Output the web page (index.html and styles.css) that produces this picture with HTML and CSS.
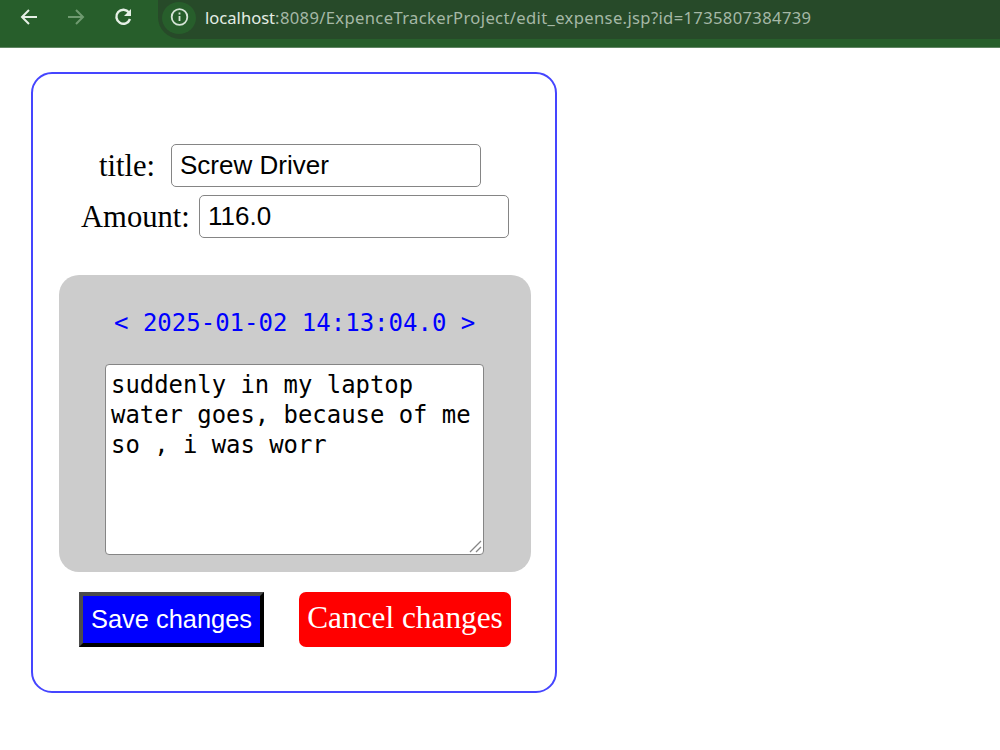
FILE: index.html
```
<!DOCTYPE html>
<html lang="en">
<head>
  <meta charset="UTF-8">
  <title>Edit Expense</title>
  <link rel="stylesheet" href="styles.css">
</head>
<body>
  <div class="toolbar">
    <svg class="nav" width="140" height="36" viewBox="0 0 140 36" fill="none" stroke-width="2">
      <path d="M37 17H22M29 10l-7 7 7 7" stroke="#e6f0e6"/>
      <path d="M68 17h15M76 10l7 7-7 7" stroke="#6f9a70"/>
      <path d="M129 12.5A7 7 0 1 0 130 19" stroke="#e6f0e6" stroke-width="2.4"/>
      <path d="M131 9v7h-7z" fill="#e6f0e6"/>
    </svg>
    <div class="address">
      <span class="site-info">
        <svg width="20" height="20" viewBox="0 0 20 20" fill="none" stroke="#d5e4d6" stroke-width="1.8">
          <circle cx="10.5" cy="9" r="7.8"/>
          <path d="M10.5 8v5M10.5 4.6v2"/>
        </svg>
      </span>
      <span class="url"><span class="host">localhost</span>:8089/ExpenceTrackerProject/edit_expense.jsp?id=1735807384739</span>
    </div>
  </div>

  <form class="card">
    <div class="field field-title">
      <label for="title">title:</label>
      <input type="text" id="title" name="title" value="Screw Driver">
    </div>
    <div class="field field-amount">
      <label for="amount">Amount:</label>
      <input type="text" id="amount" name="amount" value="116.0">
    </div>

    <div class="details">
      <div class="date">&lt; 2025-01-02 14:13:04.0 &gt;</div>
      <div class="note">
        <textarea name="description" spellcheck="false">suddenly in my laptop
water goes, because of me
so , i was worr</textarea>
        <svg class="grip" width="13" height="13" viewBox="0 0 13 13" stroke="#858585" stroke-width="1.3">
          <path d="M1 12L12 1M7 12l5-5"/>
        </svg>
      </div>
    </div>

    <div class="btns">
      <button type="submit" class="btn-save">Save changes</button>
      <a class="btn-cancel">Cancel changes</a>
    </div>
  </form>
</body>
</html>
```
FILE: styles.css
```
* {
  box-sizing: border-box;
}

body {
  margin: 0;
  background: white;
  font-family: "Liberation Serif", serif;
  font-size: 30.6px;
}

.toolbar {
  display: flex;
  height: 48px;
  background: #275e2b;
  border-bottom: 1px solid #5f8562;
}

.nav {
  flex: none;
}

.address {
  flex: 1;
  display: flex;
  align-items: center;
  height: 39px;
  margin-left: 18px;
  padding: 0 0 4px 4px;
  background: #274a29;
  border-radius: 0 0 0 22px;
}

.site-info {
  display: flex;
  align-items: center;
  justify-content: center;
  width: 34px;
  height: 32px;
  border-radius: 50%;
  background: #275e2b;
}

.url {
  margin-left: 9px;
  padding-bottom: 1px;
  font-family: "Noto Sans", sans-serif;
  font-size: 16.6px;
  letter-spacing: 0.35px;
  color: #a5b8a6;
  white-space: nowrap;
}

.host {
  letter-spacing: 0;
  color: #e4ede4;
}

.card {
  width: 526px;
  height: 621px;
  margin: 24px 0 0 31px;
  padding: 70px 24px 0 26px;
  border: 2px solid #4545ff;
  border-radius: 21px;
}

.field {
  display: flex;
  align-items: center;
  height: 43px;
}

.field label {
  padding-top: 2px;
  line-height: 43px;
}

.field input {
  width: 310px;
  height: 43px;
  padding: 0 8px;
  border: 1px solid #858585;
  border-radius: 5px;
  font-family: "Liberation Sans", Arial, sans-serif;
  font-size: 26px;
  color: black;
}

.field-title {
  padding-left: 40px;
}

.field-title label {
  width: 72px;
}

.field-amount {
  margin-top: 8px;
  padding-left: 22px;
}

.field-amount label {
  width: 118px;
}

.details {
  height: 297px;
  margin-top: 37px;
  padding: 32px 46px 0;
  border-radius: 20px;
  background: #ccc;
}

.date {
  height: 57px;
  padding-left: 9px;
  font-family: "DejaVu Sans Mono", monospace;
  font-size: 24px;
  line-height: 33px;
  color: blue;
  white-space: nowrap;
}

.note {
  position: relative;
  width: 379px;
}

textarea {
  display: block;
  width: 379px;
  height: 191px;
  padding: 5px;
  border: 1px solid #858585;
  border-radius: 4px;
  overflow: hidden;
  resize: none;
  font-family: "DejaVu Sans Mono", monospace;
  font-size: 23.9px;
  line-height: 30px;
  color: black;
}

.grip {
  position: absolute;
  right: 2px;
  bottom: 2px;
}

.btns {
  display: flex;
  gap: 35px;
  margin-top: 20px;
  padding-left: 20px;
}

.btn-save {
  width: 185px;
  height: 55px;
  padding: 0;
  border: 4px solid;
  border-color: #4c4c4c black black #4c4c4c;
  background: blue;
  color: white;
  font-family: "Liberation Sans", Arial, sans-serif;
  font-size: 25.4px;
  white-space: nowrap;
}

.btn-cancel {
  width: 212px;
  height: 55px;
  border-radius: 7px;
  background: red;
  color: white;
  font-size: 31.3px;
  line-height: 52px;
  text-align: center;
  white-space: nowrap;
}
```
